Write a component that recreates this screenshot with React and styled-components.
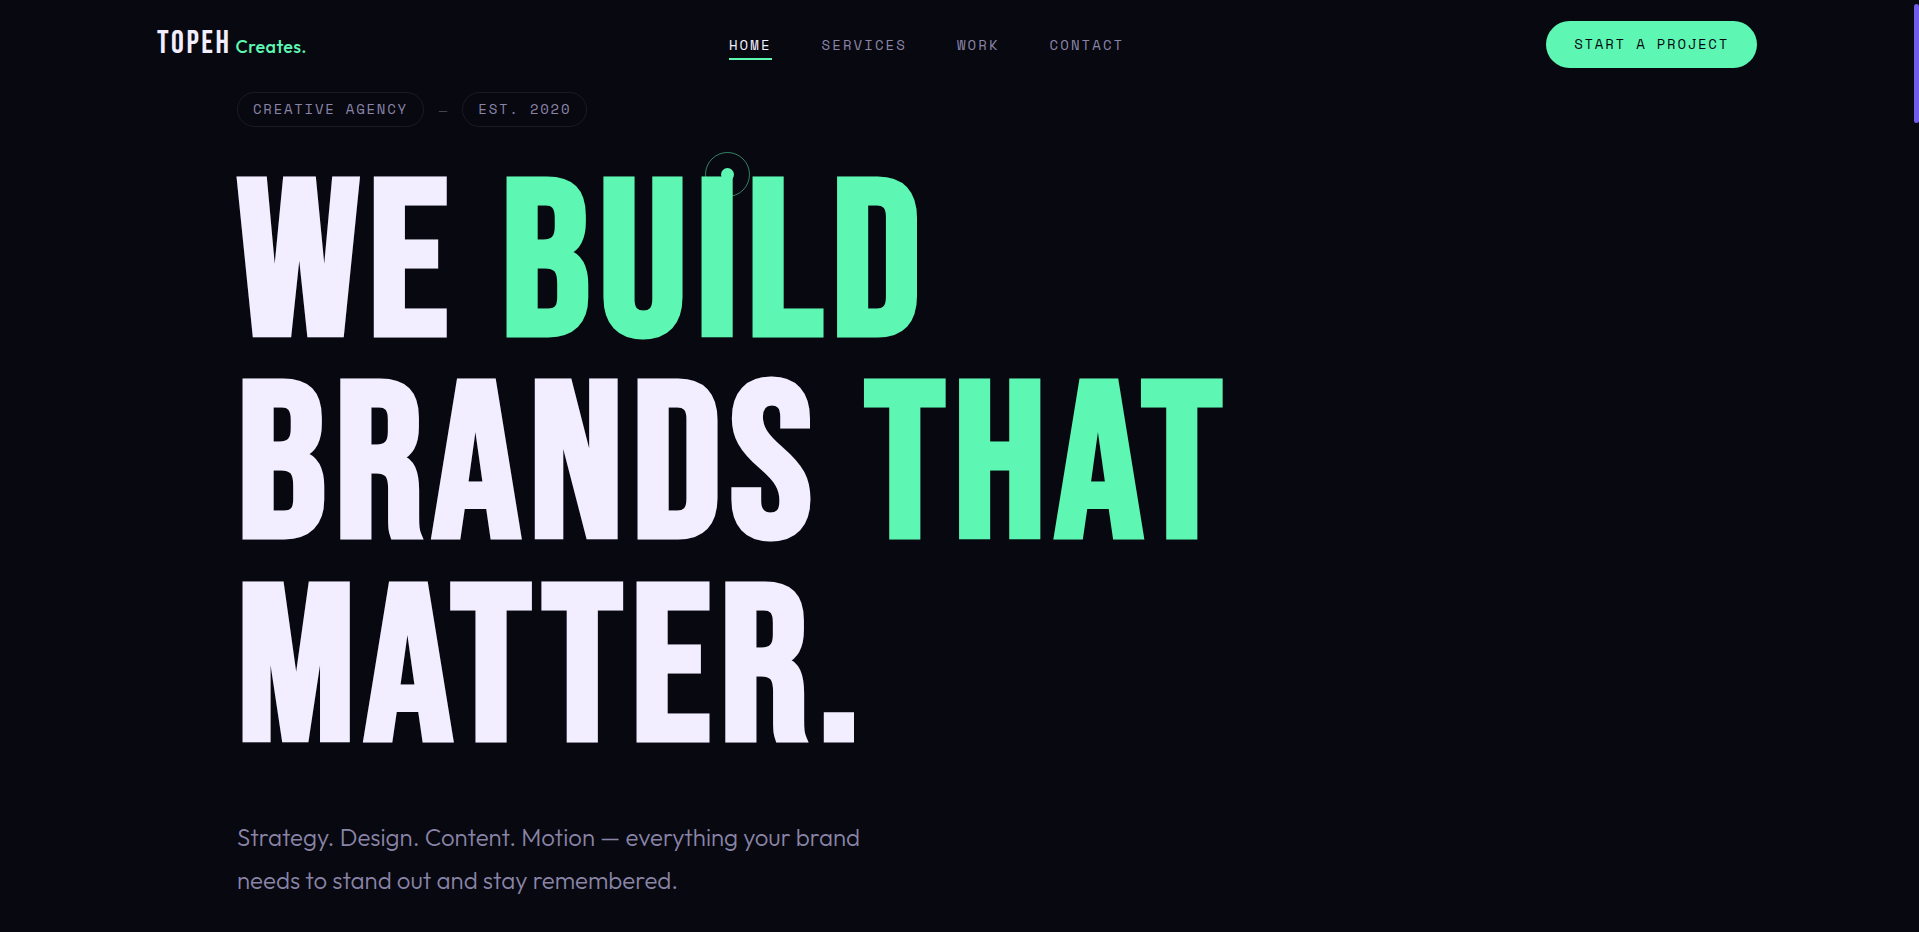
import { useState } from "react";
import styled, { createGlobalStyle } from "styled-components";

const links = ["Home", "Services", "Work", "Contact"];

const App = () => {
  const [active, setActive] = useState("Home");

  return (
    <>
      <GlobalStyle />
      <Shell>
        <Page>
          <Header>
            <Logo href="#home">
              <LogoName>TOPEH</LogoName>
              <LogoSuffix>Creates.</LogoSuffix>
            </Logo>
            <Nav>
              {links.map((link) => (
                <NavLink
                  key={link}
                  href={`#${link.toLowerCase()}`}
                  $active={link === active}
                  onClick={() => setActive(link)}
                >
                  {link}
                </NavLink>
              ))}
            </Nav>
            <StartButton type="button">Start a project</StartButton>
          </Header>
          <Hero>
            <Tags>
              <Tag>Creative Agency</Tag>
              <Dash>—</Dash>
              <Tag>Est. 2020</Tag>
            </Tags>
            <Title>
              <Line>
                We <Accent>Build</Accent>
              </Line>
              <Line>
                Brands <Accent>That</Accent>
              </Line>
              <Line>Matter.</Line>
            </Title>
            <Intro>
              Strategy. Design. Content. Motion — everything your brand needs
              to stand out and stay remembered.
            </Intro>
          </Hero>
        </Page>
        <ScrollRail>
          <ScrollThumb />
        </ScrollRail>
      </Shell>
      <CursorRing>
        <CursorDot />
      </CursorRing>
    </>
  );
};
export default App;

const GlobalStyle = createGlobalStyle`
  * {
    box-sizing: border-box;
  }
  body {
    margin: 0;
    background: #080810;
    color: #f2eeff;
    font-family: "Outfit", "Lato", sans-serif;
  }
`;

const Shell = styled.div`
  display: flex;
  height: 100vh;
  overflow: hidden;
`;

const Page = styled.div`
  flex: 1;
  min-width: 0;
`;

const Header = styled.header`
  display: flex;
  align-items: center;
  justify-content: space-between;
  max-width: 1600px;
  height: 88px;
  margin: 0 auto;
`;

const Logo = styled.a`
  display: flex;
  align-items: baseline;
  gap: 4px;
  color: inherit;
  text-decoration: none;
`;

const LogoName = styled.span`
  font-family: "Bebas Neue", sans-serif;
  font-size: 32px;
  line-height: 40px;
  letter-spacing: 0.08em;
`;

const LogoSuffix = styled.span`
  color: #5df7b3;
  font-size: 18px;
  font-weight: 500;
  letter-spacing: 0.02em;
`;

const Nav = styled.nav`
  display: flex;
  gap: 50px;
`;

const NavLink = styled.a`
  padding: 7px 0 3px;
  border-bottom: 2px solid ${(p) => (p.$active ? "#5df7b3" : "transparent")};
  color: ${(p) => (p.$active ? "#f2eeff" : "#8a85a8")};
  font-family: "Space Mono", monospace;
  font-size: 14px;
  line-height: 20px;
  letter-spacing: 0.15em;
  text-transform: uppercase;
  text-decoration: none;
`;

const StartButton = styled.button`
  height: 47px;
  padding: 0 28px 2px;
  border: none;
  border-radius: 24px;
  background: #5df7b3;
  color: #080810;
  font-family: "Space Mono", monospace;
  font-size: 14px;
  letter-spacing: 0.125em;
  text-transform: uppercase;
  cursor: pointer;
`;

const Hero = styled.main`
  max-width: 1600px;
  margin: 0 auto;
  padding: 4px 80px 0;
`;

const Tags = styled.div`
  display: flex;
  align-items: center;
  gap: 15px;
`;

const Tag = styled.span`
  padding: 6px 15px 8px;
  border: 1px solid #1b1b22;
  border-radius: 18px;
  color: #8a85a8;
  font-family: "Space Mono", monospace;
  font-size: 14px;
  line-height: 19px;
  letter-spacing: 0.125em;
  text-transform: uppercase;
`;

const Dash = styled.span`
  color: #45444f;
  font-family: "Space Mono", monospace;
  font-size: 14px;
`;

const Title = styled.h1`
  margin: 40px 0 0;
  font-family: "Bebas Neue", sans-serif;
  font-size: clamp(80px, 12vw, 220px);
  font-weight: 700;
  line-height: 0.92;
  letter-spacing: 0.04em;
  text-transform: uppercase;
`;

const Line = styled.span`
  display: block;
  white-space: nowrap;
`;

const Accent = styled.span`
  color: #5df7b3;
`;

const Intro = styled.p`
  max-width: 680px;
  margin: 42px 0 0;
  color: #8a85a8;
  font-size: 24px;
  font-weight: 300;
  line-height: 43px;
`;

const ScrollRail = styled.div`
  width: 5px;
  padding-top: 4px;
`;

const ScrollThumb = styled.div`
  height: 119px;
  border-radius: 3px;
  background: #705ce6;
`;

const CursorRing = styled.div`
  position: absolute;
  top: 152px;
  left: 705px;
  display: flex;
  align-items: center;
  justify-content: center;
  width: 45px;
  height: 45px;
  border: 1px solid rgba(93, 247, 179, 0.5);
  border-radius: 50%;
  pointer-events: none;
`;

const CursorDot = styled.div`
  width: 13px;
  height: 13px;
  border-radius: 50%;
  background: #5df7b3;
`;
